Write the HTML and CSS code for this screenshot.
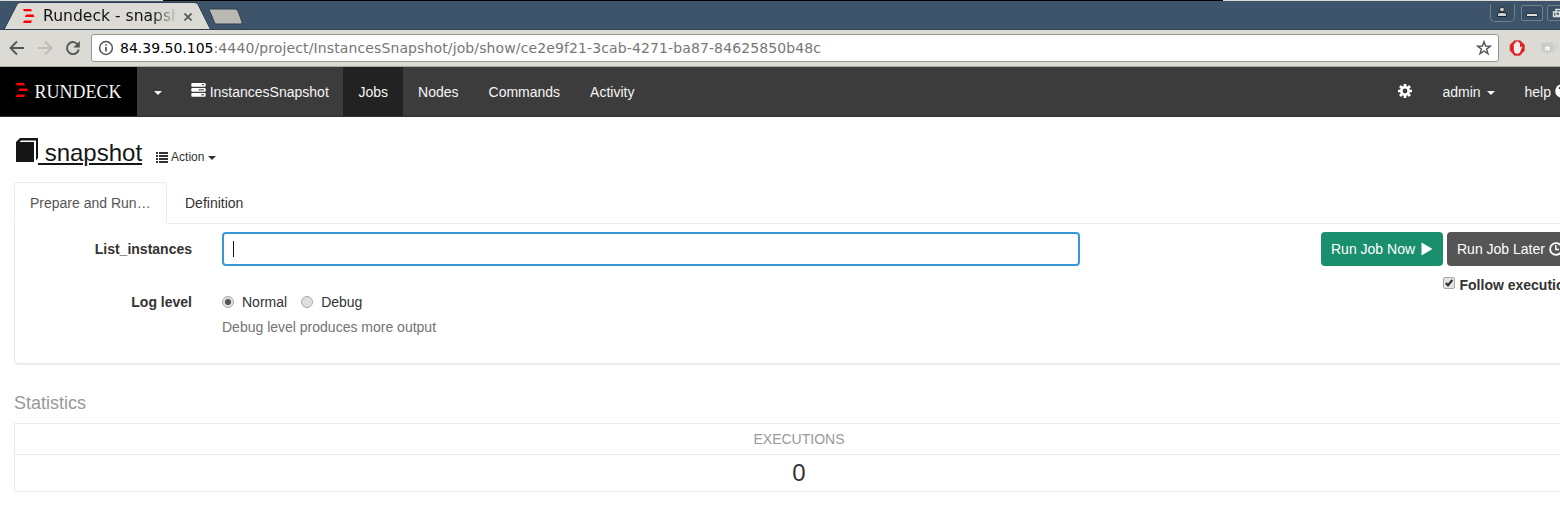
FILE: index.html
```html
<!DOCTYPE html>
<html lang="en">
<head>
<meta charset="utf-8">
<title>Rundeck - snapshot</title>
<link rel="stylesheet" href="styles.css">
</head>
<body>
<div class="desktop-edge"></div>
<div class="tabstrip">
  <div class="browser-tab">
    <svg class="tab-shape" width="212" height="28" viewBox="0 0 212 28"><path d="M4 28 L17 2.500 Q18 .5 20 .5 L194 .5 Q197 .5 198 2.500 L211 28Z" fill="#dbdad4"/><path d="M0 27.500H4L17 2.500Q18 .5 20 .5H194Q197 .5 198 2.500L210.500 27.500" fill="none" stroke="#2f4152"/></svg>
    <svg class="favicon" width="13" height="14" viewBox="0 0 13 14"><path d="M1 0H9L10 2.200H2ZM4 5.500H11.500L12.500 8H3ZM2 11.500H10L9 14H1Z" fill="#f00"/></svg>
    <span class="tab-title">Rundeck - snapsh</span>
    <svg class="tab-close" width="8" height="8" viewBox="0 0 8 8"><path d="M.5.5L7.500 7.500M7.500.5L.5 7.500" stroke="#555" stroke-width="1.700"/></svg>
  </div>
  <svg class="new-tab" width="36" height="17" viewBox="0 0 36 17"><path d="M2 1H27Q29 1 30 3L34 14Q34.500 16 33 16H9Q7 16 6.500 14.500L1.500 2.500Q1 1 2 1Z" fill="#bab8b3" stroke="#2f4152"/></svg>
  <div class="window-buttons">
    <svg width="80" height="20" viewBox="0 0 80 20">
      <path d="M.5 0V13.500Q.5 17.500 4.500 17.500H20.500Q24.500 17.500 24.500 13.500V0" fill="#3a5064" stroke="#70808c"/>
      <circle cx="12" cy="5.500" r="2.400" fill="#ccd0d3" stroke="#19232c"/><path d="M7.500 12.500V10.500Q7.500 8.500 10 8.500H14Q16.500 8.500 16.500 10.500V12.500Z" fill="#ccd0d3" stroke="#19232c"/>
      <rect x="31.500" y="1.500" width="21" height="15" rx="1.500" fill="#3a5064" stroke="#70808c"/><path d="M36.500 9.500H47.500V12.500H36.500Z" fill="#e0e0dd" stroke="#26323e"/>
      <rect x="57.500" y="1.500" width="24" height="15" rx="1.500" fill="#3a5064" stroke="#70808c"/><path d="M66 5.500H74V11.500H66Z M63.500 8H69.500V12.500H63.500Z" fill="#3a5064" stroke="#dce0e2" stroke-width="1.400"/>
    </svg>
  </div>
</div>
<div class="toolbar">
  <svg class="nav-arrows" width="81" height="20" viewBox="0 0 81 20" fill="none" stroke-width="1.900">
    <path d="M16 10H3M9 3.500L2.500 10L9 16.500" stroke="#555"/>
    <path d="M30 10H43M37 3.500L43.500 10L37 16.500" stroke="#bdbcb7"/>
    <path d="M70 6.800A6 6 0 1 0 70.800 11.500" stroke="#555"/><path d="M71.800 3V9.500H65.300Z" fill="#555"/>
  </svg>
  <div class="address">
    <svg width="16" height="16" viewBox="0 0 16 16"><circle cx="8" cy="8" r="6.400" fill="none" stroke="#555" stroke-width="1.500"/><path d="M8 7V11.500M8 4.200V5.800" stroke="#555" stroke-width="1.700"/></svg>
    <span class="url"><b>84.39.50.105</b>:4440/project/InstancesSnapshot/job/show/ce2e9f21-3cab-4271-ba87-84625850b48c</span>
    <svg class="star" width="16" height="16" viewBox="0 0 16 16"><path d="M8 1.700L9.600 6.100L14.300 6.200L10.600 9.100L12 13.700L8 11L4 13.700L5.400 9.100L1.700 6.200L6.400 6.100Z" fill="none" stroke="#555" stroke-width="1.400"/></svg>
  </div>
  <svg class="extensions" width="60" height="20" viewBox="0 0 60 20">
    <path d="M5.500 2.500H11L15.500 6.800V12.500L11 17.500H5.500L1 12.500V6.800Z" fill="#ea1c20" stroke="#ba5b57" stroke-width=".6"/>
    <path d="M4.800 9.500V6Q5.500 5 6.300 6V4Q7 3.300 7.800 4V3.500Q8.500 3 9.300 3.700V4.500Q10.700 4 11 5.500V9.500L12.500 8.300L13.200 9L11 14.500Q9 16.500 6.500 15.500Q4.800 14 4.800 12Z" fill="#f1eeee"/>
    <path d="M32 5.500Q32 4.500 33 4.500H43Q44.500 4.500 44.500 6V13Q44.500 14.500 43 14.500H40L38.500 16.500L37 14.500H34L32 12.500Z" fill="#cbcbca"/><path d="M46 5V13M48 6V12" stroke="#cfcfcc"/><circle cx="38" cy="10.500" r="1.400" fill="none" stroke="#fff" stroke-width="1.300"/><path d="M40 8.500V12.500" stroke="#fff"/>
  </svg>
</div>
<nav class="navbar">
  <a class="brand"><svg width="13" height="14" viewBox="0 0 13 14"><path d="M.5 0H9L10 2.500H2ZM4.500 5.500H12L13 8H3.500ZM2 11.500H10L9 14H.5Z" fill="#f00"/></svg><span>RUNDECK</span></a>
  <a class="nav-item drop"><i class="caret"></i></a>
  <a class="nav-item project"><svg width="15" height="14" viewBox="0 0 15 14"><rect x=".3" width="14.400" height="3.800" rx="1" fill="#fff"/><rect x=".3" y="5" width="14.400" height="3.800" rx="1" fill="#fff"/><rect x=".3" y="10" width="14.400" height="3.800" rx="1" fill="#fff"/><path d="M11 1.600H13M7.500 6.800H13M10 11.800H13" stroke="#333"/></svg><span>InstancesSnapshot</span></a>
  <a class="nav-item active">Jobs</a>
  <a class="nav-item">Nodes</a>
  <a class="nav-item">Commands</a>
  <a class="nav-item">Activity</a>
  <div class="nav-right">
    <a class="nav-item gear"><svg width="14" height="14" viewBox="0 0 14 14"><g stroke="#fff" stroke-width="2.700"><path d="M7 0V14M0 7H14M2 2L12 12M12 2L2 12"/></g><circle cx="7" cy="7" r="5" fill="#fff"/><circle cx="7" cy="7" r="2.400" fill="#3c3c3c"/></svg></a>
    <a class="nav-item admin">admin <i class="caret"></i></a>
    <a class="nav-item help">help <svg width="14" height="14" viewBox="0 0 14 14"><circle cx="7" cy="7" r="6.800" fill="#fff"/><path d="M4.500 5Q4.500 3 7 3Q9.500 3 9.500 5Q9.500 6 7 7.500V9M7 10V12" stroke="#3c3c3c" stroke-width="1.800" fill="none"/></svg></a>
  </div>
</nav>
<main class="page">
  <header class="job-head">
    <a class="job-name"><svg width="24" height="25" viewBox="0 0 24 25"><path d="M2 4L6 0H24V20L22 22.500V2.500H7L5.500 4H20V24H2Z" fill="#161616"/></svg><span class="job-label">&nbsp;snapshot</span></a>
    <span class="action"><svg width="12" height="11" viewBox="0 0 12 11"><path d="M0 1H2M3 1H12M0 4H2M3 4H12M0 7H2M3 7H12M0 10H2M3 10H12" stroke="#333" stroke-width="1.900"/></svg><span>Action</span><i class="caret"></i></span>
  </header>
  <div class="tabs"><a class="tab selected">Prepare and Run…</a><a class="tab">Definition</a></div>
  <section class="panel">
    <div class="form">
      <label class="label">List_instances</label>
      <div class="field"><i class="cursor"></i></div>
      <label class="label level">Log level</label>
      <div class="levels">
        <div class="radios"><i class="radio on"></i><span>Normal</span><i class="radio second"></i><span>Debug</span></div>
        <div class="hint">Debug level produces more output</div>
      </div>
    </div>
    <div class="run">
      <div class="buttons">
        <a class="btn now">Run Job Now <svg width="12" height="14" viewBox="0 0 12 14"><path d="M.5.5L11.500 7L.5 13.500Z" fill="#fff"/></svg></a>
        <a class="btn later">Run Job Later <svg width="14" height="14" viewBox="0 0 14 14"><circle cx="7" cy="7" r="5.900" fill="none" stroke="#fff" stroke-width="1.800"/><path d="M6.800 3V7.500H10" fill="none" stroke="#fff" stroke-width="1.400"/></svg></a>
      </div>
      <div class="follow"><svg width="12" height="12" viewBox="0 0 12 12"><rect x=".5" y=".5" width="11" height="11" rx="1.500" fill="#e4e4e4" stroke="#a8a8a8"/><path d="M2.800 6L5 8.300L9.300 3" fill="none" stroke="#333" stroke-width="2.200"/></svg><span>Follow execution</span></div>
    </div>
  </section>
  <h2 class="stats-title">Statistics</h2>
  <div class="stats"><div class="stats-head">EXECUTIONS</div><div class="stats-value">0</div></div>
</main>
</body>
</html>
```
FILE: styles.css
```css
* { box-sizing: border-box; }
html { overflow: hidden; }
body { margin: 0; height: 508px; overflow: hidden; background: #fff; color: #333; font: 14px/20px "Liberation Sans", Arial, sans-serif; }
svg { display: block; flex: none; }
.desktop-edge { height: 1px; background: linear-gradient(90deg, #dbdad4 163px, #000 163px 1223px, #dbdad4 1223px); }
.tabstrip { height: 29px; display: flex; background: #3d546a; border-bottom: 1px solid #2f4152; overflow: hidden; }
.browser-tab { position: relative; flex: none; width: 206px; height: 29px; display: flex; align-items: center; padding-left: 22px; margin-bottom: -1px; }
.tab-shape { position: absolute; left: 0; top: 1px; }
.browser-tab .favicon, .tab-title, .tab-close { position: relative; }
.favicon { margin-top: 1px; }
.tab-title { width: 133px; margin-left: 8px; white-space: nowrap; font: 15.600px/20px "DejaVu Sans", sans-serif; color: transparent; background: linear-gradient(90deg, #111 108px, #dbdad4 135px); -webkit-background-clip: text; background-clip: text; }
.tab-close { margin-left: 8px; margin-top: 2px; }
.new-tab { margin: 7px 0 0 2px; }
.window-buttons { width: 70px; margin: 3px 0 0 auto; overflow: hidden; }
.toolbar { height: 37px; display: flex; align-items: center; background: #dbdad4; border-bottom: 1px solid #aaa9a5; overflow: hidden; }
.nav-arrows { margin-left: 8px; }
.address { display: flex; align-items: center; width: 1408px; height: 28px; flex: none; margin-left: 2px; padding: 0 6px; background: #fff; border: 1px solid #94938f; border-radius: 3px; }
.url { margin-left: 6px; font: 14px/20px "DejaVu Sans", sans-serif; letter-spacing: .117px; color: #777; white-space: nowrap; }
.url b { color: #000; font-weight: 400; letter-spacing: 0; }
.star { margin-left: auto; }
.extensions { margin-left: 10px; }
.navbar { display: flex; height: 50px; background: #3c3c3c; border-bottom: 1px solid #303030; color: #f5f5f5; overflow: hidden; }
.brand { width: 137px; display: flex; align-items: center; padding-left: 15px; background: #000; font: 18px/20px "Liberation Serif", serif; margin-bottom: -1px; flex: none; }
.brand svg { margin: -4px 6.500px 0 0; }
.nav-item { display: flex; align-items: center; padding: 0 15px; white-space: nowrap; }
.active { background: #222; }
.caret { display: inline-block; border: 4px solid transparent; border-top-color: currentColor; border-bottom: 0; margin-top: 2px; }
.drop { width: 39px; padding-left: 17px; }
.project { padding-right: 14.700px; }
.project span { margin-left: 3.700px; }
.project svg { margin-top: -3px; }
.nav-right { margin-left: auto; margin-right: -9px; display: flex; flex: none; }
.gear svg { margin-top: -2px; }
.admin .caret { margin-left: 6px; }
.help svg { margin: -2px 0 0 4px; }
.nav-right .help { padding-right: 0; }
.page { width: 1584px; padding: 0 0 0 14px; }
.job-head { display: flex; height: 65px; padding-top: 21px; align-items: flex-start; color: #161616; }
.job-name { display: flex; font-size: 24px; line-height: 30px; }
.job-label { text-decoration: underline; white-space: pre; }
.action { display: flex; align-items: center; margin: 9px 0 0 14px; font-size: 12px; color: #333; }
.action span { margin: 0 4px 0 3px; }
.tabs { display: flex; height: 42px; border-bottom: 1px solid #ececec; }
.tab { padding: 10px 15px 0; margin-left: 2px; border: 1px solid transparent; }
.selected { width: 153px; height: 42px; margin: 0; background: #fff; border: 1px solid #ececec; border-bottom-color: #fff; border-radius: 4px 4px 0 0; color: #555; }
.panel { display: flex; justify-content: space-between; height: 140px; border: 1px solid #e8e8e8; border-top: 0; border-radius: 0 0 4px 4px; box-shadow: 0 1px 1px #00000010; padding: 8px 8px 0 0; }
.form { display: grid; grid-template-columns: 177px 858px; grid-template-rows: 34px auto; gap: 26px 30px; }
.label { text-align: right; font-weight: 700; padding-top: 7px; }
.level { padding-top: 0; }
.field { height: 34px; border: 2px solid #3498db; border-radius: 4px; padding: 7px 9px; }
.cursor { display: block; width: 1px; height: 16px; background: #111; }
.radios { display: flex; align-items: center; }
.radio { width: 12px; height: 12px; border: 1px solid #aaa; border-radius: 50%; background: #dedede; }
.radio.on { background: radial-gradient(circle, #555 0 2.700px, #e0e0e0 3.400px); }
.radio.second { margin-left: 14px; }
.radios span { margin-left: 8px; }
.hint { margin-top: 5px; color: #737373; }
.buttons { display: flex; gap: 4px; }
.btn { display: flex; align-items: center; height: 34px; padding: 0 10px; border-radius: 4px; color: #fff; white-space: nowrap; }
.btn svg { margin: -1px 0 0 4px; }
.now svg { margin-left: 5.500px; }
.now { background: #1a8f6e; width: 122px; }
.later { background: #555; width: 128px; }
.follow { display: flex; gap: 4.500px; margin: 9px 0 0 122px; font-weight: 700; white-space: nowrap; }
.follow svg { margin-top: 2px; }
.stats-title { margin: 29px 0 10px; font-size: 18px; line-height: 20px; font-weight: 400; color: #999; }
.stats { border: 1px solid #ececec; width: 1570px; text-align: center; }
.stats-head { height: 31px; line-height: 31px; border-bottom: 1px solid #ececec; color: #999; }
.stats-value { height: 36px; line-height: 36px; font-size: 24px; }
```
